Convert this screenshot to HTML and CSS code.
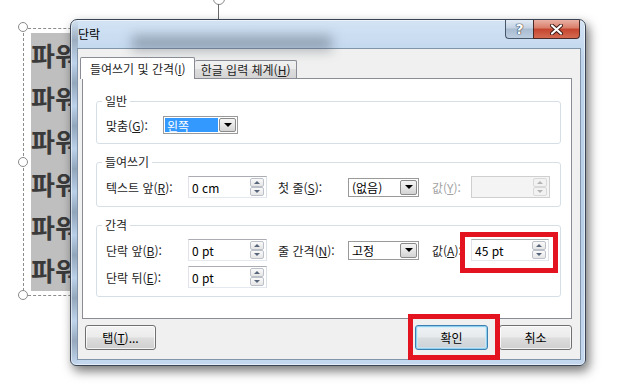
FILE: index.html
```html
<!DOCTYPE html>
<html lang="ko">
<head>
    <meta charset="UTF-8">
    <meta name="viewport" content="width=device-width, initial-scale=1.0">
    <title>단락</title>
    <link rel="stylesheet" href="styles.css">
</head>
<body>
    <div class="slide">
        <div class="rotate-handle"></div>
        <div class="textbox">
            <div class="highlight">
                <p>파워</p>
                <p>파워</p>
                <p>파워</p>
                <p>파워</p>
                <p>파워</p>
                <p>파워</p>
            </div>
        </div>
        <span class="handle handle-top"></span>
        <span class="handle handle-mid"></span>
        <span class="handle handle-bottom"></span>

        <div class="dialog">
            <div class="titlebar">
                <span class="title">단락</span>
                <div class="caption-buttons">
                    <span class="cap cap-help">?</span>
                    <span class="cap cap-close">
                        <svg width="13" height="11" viewBox="0 0 13 11">
                            <path d="M2 1.5 L11 9.5 M11 1.5 L2 9.5" stroke="#3b1a14" stroke-width="4" stroke-linecap="round"/>
                            <path d="M2 1.5 L11 9.5 M11 1.5 L2 9.5" stroke="#ffffff" stroke-width="2.2" stroke-linecap="round"/>
                        </svg>
                    </span>
                </div>
            </div>

            <div class="client">
                <div class="tabs">
                    <div class="tab active">들여쓰기 및 간격(<u>I</u>)</div>
                    <div class="tab">한글 입력 체계(<u>H</u>)</div>
                </div>

                <div class="panel">
                    <fieldset class="group">
                        <legend>일반</legend>
                        <div class="row-general">
                            <label class="lbl lbl-short">맞춤(<u>G</u>):</label>
                            <div class="combo combo-align">
                                <span class="combo-value selected">왼쪽</span>
                                <span class="drop"></span>
                            </div>
                        </div>
                    </fieldset>

                    <fieldset class="group">
                        <legend>들여쓰기</legend>
                        <div class="grid">
                            <label class="lbl">텍스트 앞(<u>R</u>):</label>
                            <div class="spin">
                                <span class="val">0 cm</span>
                                <span class="spinner"><i class="up"></i><i class="down"></i></span>
                            </div>
                            <label class="lbl">첫 줄(<u>S</u>):</label>
                            <div class="combo">
                                <span class="combo-value">(없음)</span>
                                <span class="drop"></span>
                            </div>
                            <label class="lbl disabled">값(<u>Y</u>):</label>
                            <div class="spin spin-disabled">
                                <span class="val"></span>
                                <span class="spinner"><i class="up"></i><i class="down"></i></span>
                            </div>
                        </div>
                    </fieldset>

                    <fieldset class="group">
                        <legend>간격</legend>
                        <div class="grid">
                            <label class="lbl">단락 앞(<u>B</u>):</label>
                            <div class="spin">
                                <span class="val">0 pt</span>
                                <span class="spinner"><i class="up"></i><i class="down"></i></span>
                            </div>
                            <label class="lbl">줄 간격(<u>N</u>):</label>
                            <div class="combo">
                                <span class="combo-value">고정</span>
                                <span class="drop"></span>
                            </div>
                            <label class="lbl">값(<u>A</u>):</label>
                            <div class="spin spin-short">
                                <span class="val">45 pt</span>
                                <span class="spinner"><i class="up"></i><i class="down"></i></span>
                            </div>

                            <label class="lbl">단락 뒤(<u>E</u>):</label>
                            <div class="spin">
                                <span class="val">0 pt</span>
                                <span class="spinner"><i class="up"></i><i class="down"></i></span>
                            </div>
                        </div>
                    </fieldset>
                </div>

                <div class="buttons">
                    <button type="button" class="btn btn-tab">탭(<u>T</u>)...</button>
                    <button type="button" class="btn btn-default">확인</button>
                    <button type="button" class="btn">취소</button>
                </div>
            </div>
        </div>

        <div class="mark mark-value"></div>
        <div class="mark mark-ok"></div>
    </div>
</body>
</html>
```

FILE: styles.css
```css
* {
    box-sizing: border-box;
}
body {
    margin: 0;
    background-color: #ffffff;
    font-family: "Noto Sans CJK KR", "Noto Sans", sans-serif;
    font-size: 12px;
    color: #1e1e1e;
}
.slide {
    position: relative;
    width: 636px;
    height: 391px;
    overflow: hidden;
}

/* text box behind the dialog */
.textbox {
    position: absolute;
    left: 23px;
    top: 28px;
    width: 260px;
    height: 268px;
    border: 1px dashed #8c8c8c;
    padding: 4px 0 0 7px;
}
.highlight {
    width: 140px;
    background-color: #bfbfbf;
}
.highlight p {
    margin: 0;
    height: 43px;
    line-height: 43px;
    font-size: 26px;
    font-weight: bold;
    color: #3a3a3a;
}
.handle {
    position: absolute;
    left: 18px;
    width: 10px;
    height: 10px;
    border: 1.5px solid #8a8a8a;
    border-radius: 50%;
    background-color: #ffffff;
}
.handle-top { top: 22px; }
.handle-mid { top: 157px; }
.handle-bottom { top: 290px; }
.rotate-handle {
    position: absolute;
    left: 213px;
    top: -7px;
    width: 12px;
    height: 12px;
    border: 1.5px solid #8a8a8a;
    border-radius: 50%;
    background-color: #ffffff;
}
.rotate-handle::after {
    content: "";
    position: absolute;
    left: 4px;
    top: 10px;
    width: 1px;
    height: 16px;
    background-color: #6a6a6a;
}

/* dialog window */
.dialog {
    position: absolute;
    left: 70px;
    top: 19px;
    width: 516px;
    height: 347px;
    display: flex;
    flex-direction: column;
    padding: 0 4px 5px 6px;
    border: 1px solid #3a4656;
    border-radius: 7px 7px 6px 6px;
    background:
        repeating-linear-gradient(180deg, rgba(70, 85, 100, 0.0) 0px, rgba(70, 85, 100, 0.35) 20px, rgba(255, 255, 255, 0.0) 43px) 0 0 / 7px 100% no-repeat,
        linear-gradient(180deg, #d3e3f4 0%, #bed4ec 12%, #b8cfe8 60%, #c3d7ee 100%);
    box-shadow: 3px 5px 11px rgba(0, 0, 0, 0.55), inset 0 0 0 1px rgba(255, 255, 255, 0.55);
    overflow: hidden;
}
.titlebar {
    position: relative;
    display: flex;
    align-items: flex-start;
    height: 28px;
    flex-shrink: 0;
}
.titlebar::before {
    content: "";
    position: absolute;
    left: 55px;
    top: 15px;
    width: 200px;
    height: 16px;
    background-color: rgba(55, 65, 80, 0.35);
    filter: blur(6px);
}
.title {
    position: relative;
    padding-left: 1px;
    line-height: 27px;
    color: #000000;
}
.caption-buttons {
    display: flex;
    margin-left: auto;
    margin-right: 1px;
    position: relative;
}
.cap {
    display: flex;
    align-items: center;
    justify-content: center;
    height: 19px;
    border: 1px solid #48566a;
    border-top: none;
}
.cap-help {
    width: 28px;
    border-right: none;
    border-radius: 0 0 0 4px;
    background: linear-gradient(180deg, #e3ebf5 0%, #c3d1e2 45%, #a9bbd0 50%, #bccde0 100%);
    color: #ffffff;
    font-family: "DejaVu Sans", sans-serif;
    font-size: 14px;
    font-weight: bold;
    text-shadow: 0 0 1px #2d3a4a, 0 0 1px #2d3a4a, 0 0 1px #2d3a4a;
}
.cap-close {
    width: 47px;
    border-radius: 0 0 4px 0;
    border-color: #4a2a26;
    background: linear-gradient(180deg, #eab0a4 0%, #d97d69 45%, #c5452f 50%, #d46a50 100%);
}

.client {
    flex: 1;
    display: flex;
    flex-direction: column;
    padding: 8px 8px 9px 4px;
    background-color: #f0f0f0;
    border: 1px solid #8294a8;
}

/* tabs */
.tabs {
    display: flex;
    align-items: flex-end;
    height: 21px;
}
.tab {
    height: 18px;
    padding: 0 5px 0 6px;
    line-height: 17px;
    border: 1px solid #898c95;
    border-bottom: none;
    border-left: none;
    border-radius: 2px 2px 0 0;
    background: linear-gradient(180deg, #f2f2f2 0%, #ebebeb 45%, #dddddd 50%, #d4d4d4 100%);
    white-space: nowrap;
}
.tab.active {
    position: relative;
    z-index: 1;
    height: 22px;
    margin-left: -2px;
    margin-bottom: -1px;
    padding: 0 8px 0 9px;
    line-height: 21px;
    border-left: 1px solid #898c95;
    background: #ffffff;
}

.panel {
    height: 241px;
    padding: 14px 10px 0 13px;
    background-color: #ffffff;
    border: 1px solid #898c95;
}

/* group boxes */
.group {
    margin: 0 0 10px 0;
    padding: 6px 10px 8px 9px;
    border: 1px solid #d5dfe5;
    border-radius: 3px;
    min-width: 0;
}
.group:last-child {
    margin-bottom: 0;
}
.group legend {
    margin-left: -4px;
    padding: 0 3px;
    line-height: 16px;
    color: #1e1e1e;
}
.row-general {
    display: flex;
    align-items: center;
    height: 20px;
}
.lbl-short {
    width: 57px;
}
.grid {
    display: grid;
    grid-template-columns: 82px 90px 70px 84px 39px 78px;
    grid-auto-rows: 22px;
    row-gap: 5px;
    align-items: center;
}
.lbl {
    white-space: nowrap;
}
.lbl.disabled {
    color: #a3a3a3;
}

/* spin boxes */
.spin {
    display: flex;
    align-items: center;
    width: 79px;
    height: 22px;
    padding: 0 1px 0 3px;
    background-color: #ffffff;
    border: 1px solid #abadb3;
    border-color: #abadb3 #dbdfe6 #e3e9ef #e2e3ea;
}
.spin-short {
    width: 78px;
}
.spin .val {
    flex: 1;
    color: #000000;
}
.spinner {
    display: flex;
    flex-direction: column;
    width: 14px;
    height: 18px;
    margin-right: 1px;
}
.spinner i {
    flex: 1;
    display: flex;
    align-items: center;
    justify-content: center;
    border: 1px solid #bcc1c9;
    border-radius: 2px;
    background: linear-gradient(180deg, #fafafa 0%, #e6e6e6 100%);
}
.spinner i::after {
    content: "";
    border-left: 3px solid transparent;
    border-right: 3px solid transparent;
    border-bottom: 3px solid #56657a;
}
.spinner i.down::after {
    border-bottom: none;
    border-top: 3px solid #56657a;
}
.spin-disabled {
    background-color: #f4f4f4;
    border-color: #cfcfcf;
}
.spin-disabled .spinner i {
    border-color: #d9d9d9;
    background: #f2f2f2;
}
.spin-disabled .spinner i::after {
    border-bottom-color: #b4b4b4;
    border-top-color: #b4b4b4;
}

/* combo boxes */
.combo {
    display: flex;
    align-items: center;
    width: 71px;
    height: 19px;
    padding: 1px;
    background-color: #ffffff;
    border: 1px solid #9a9a9a;
}
.combo-align {
    width: 75px;
    height: 18px;
}
.combo-value {
    flex: 1;
    height: 100%;
    padding-left: 2px;
    line-height: 15px;
    color: #000000;
}
.combo-value.selected {
    background-color: #3399ff;
    color: #ffffff;
}
.drop {
    display: flex;
    align-items: center;
    justify-content: center;
    width: 17px;
    height: 100%;
    margin-left: 1px;
    border: 1px solid #8b8b8b;
    border-radius: 2px;
    background: linear-gradient(180deg, #f4f4f4 0%, #e6e6e6 50%, #d3d3d3 100%);
}
.drop::after {
    content: "";
    border-left: 4px solid transparent;
    border-right: 4px solid transparent;
    border-top: 4px solid #000000;
}

/* bottom buttons */
.buttons {
    display: flex;
    gap: 11px;
    margin-top: 6px;
    padding-left: 3px;
}
.btn {
    width: 73px;
    height: 25px;
    padding: 0;
    font-family: "Noto Sans CJK KR", "Noto Sans", sans-serif;
    font-size: 12px;
    color: #000000;
    border: 1px solid #707070;
    border-radius: 3px;
    background: linear-gradient(180deg, #f3f3f3 0%, #ebebeb 48%, #dddddd 52%, #cfcfcf 100%);
    box-shadow: inset 0 0 0 1px rgba(255, 255, 255, 0.75);
}
.btn-tab {
    width: 71px;
    margin-right: auto;
}
.btn-default {
    border-color: #3c7fb1;
    box-shadow: inset 0 0 0 1px #8fd0f0, inset 0 0 0 2px rgba(200, 235, 250, 0.6);
    background: linear-gradient(180deg, #f0f3f5 0%, #e6eaed 48%, #d8dde0 52%, #cbd1d5 100%);
}

/* red annotation boxes */
.mark {
    position: absolute;
    border: 5px solid #e3141f;
}
.mark-value {
    left: 460px;
    top: 232px;
    width: 98px;
    height: 41px;
}
.mark-ok {
    left: 408px;
    top: 314px;
    width: 92px;
    height: 46px;
}
```
